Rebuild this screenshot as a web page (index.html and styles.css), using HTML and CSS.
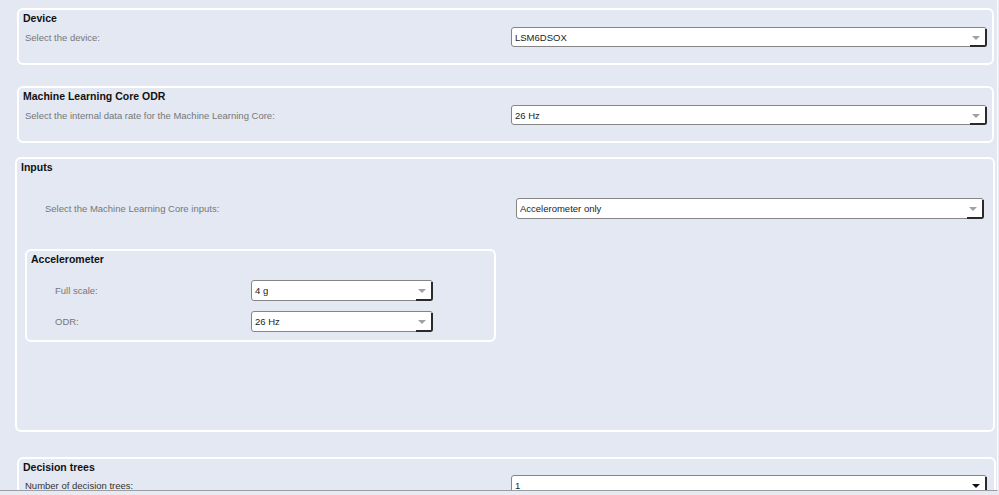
FILE: index.html
```html
<!DOCTYPE html>
<html lang="en">

<head>
    <meta charset="UTF-8">
    <meta name="viewport" content="width=device-width, initial-scale=1.0">
    <title>Machine Learning Core</title>
    <link rel="stylesheet" href="styles.css">
</head>

<body>
    <div class="viewport">
        <section class="panel panel-device">
            <h3>Device</h3>
            <div class="row">
                <label>Select the device:</label>
                <div class="combo">LSM6DSOX<span class="combo-btn"></span></div>
            </div>
        </section>

        <section class="panel panel-odr">
            <h3>Machine Learning Core ODR</h3>
            <div class="row">
                <label>Select the internal data rate for the Machine Learning Core:</label>
                <div class="combo">26 Hz<span class="combo-btn"></span></div>
            </div>
        </section>

        <section class="panel panel-inputs">
            <h3>Inputs</h3>
            <div class="row row-inputs">
                <label>Select the Machine Learning Core inputs:</label>
                <div class="combo">Accelerometer only<span class="combo-btn"></span></div>
            </div>

            <section class="panel panel-accel">
                <h3>Accelerometer</h3>
                <div class="row row-accel">
                    <label>Full scale:</label>
                    <div class="combo">4 g<span class="combo-btn"></span></div>
                </div>
                <div class="row row-accel">
                    <label>ODR:</label>
                    <div class="combo">26 Hz<span class="combo-btn"></span></div>
                </div>
            </section>
        </section>

        <section class="panel panel-trees">
            <h3>Decision trees</h3>
            <div class="row">
                <label class="dark">Number of decision trees:</label>
                <div class="combo active">1<span class="combo-btn"></span></div>
            </div>
        </section>
    </div>
</body>

</html>
```

FILE: styles.css
```css
html, body {
    margin: 0;
    padding: 0;
}

body {
    font-family: "Liberation Sans", Arial, sans-serif;
    font-size: 9.5px;
    background-color: #e8eaf0;
    color: #222;
    width: 999px;
    height: 495px;
    overflow: hidden;
}

.viewport {
    height: 491px;
    box-sizing: border-box;
    background-color: #e3e8f2;
    border-bottom: 1px solid #9a9ca4;
    border-right: 1px solid #fbfcfe;
    width: 998px;
    overflow: hidden;
    padding-top: 8px;
}

.panel {
    border: 2px solid #fff;
    border-radius: 6px;
    box-sizing: border-box;
}

.panel h3 {
    margin: 0;
    padding: 1px 0 0 4px;
    font-size: 10.5px;
    font-weight: bold;
    line-height: 14px;
    color: #111;
}

.row {
    display: grid;
    grid-template-columns: 486px 476px;
    align-items: center;
    padding-left: 6px;
    margin-top: 2px;
}

.row label {
    color: #777;
}

.row label.dark {
    color: #333;
}

.panel-device {
    margin-left: 17px;
    width: 977px;
    height: 57px;
}

.panel-odr {
    margin-left: 17px;
    margin-top: 21px;
    width: 977px;
    height: 57px;
}

.panel-inputs {
    margin-left: 15px;
    margin-top: 14px;
    width: 980px;
    height: 275px;
}

.row-inputs {
    grid-template-columns: 471px 468px;
    padding-left: 28px;
    margin-top: 24px;
}

.row-inputs .combo {
    height: 21px;
}

.panel-accel {
    margin-left: 8px;
    margin-top: 30px;
    width: 471px;
    height: 93px;
}

.row-accel {
    grid-template-columns: 196px 182px;
    padding-left: 28px;
    margin-top: 14px;
}

.row-accel .combo {
    height: 21px;
}

.row-accel + .row-accel {
    margin-top: 10px;
}

.panel-trees {
    margin-left: 17px;
    margin-top: 25px;
    width: 979px;
    height: 80px;
}

.panel-trees .row {
    margin-top: 1px;
}

.combo {
    position: relative;
    height: 20px;
    box-sizing: border-box;
    border: 1px solid #858585;
    border-radius: 3px;
    background-color: #fff;
    padding-left: 3px;
    display: flex;
    align-items: center;
    color: #222;
}

.combo-btn {
    position: absolute;
    right: -1px;
    bottom: -1px;
    width: 17px;
    height: 100%;
    box-sizing: border-box;
    border-right: 2px solid #2a2a2a;
    border-bottom: 2px solid #2a2a2a;
    border-bottom-right-radius: 3px;
}

.combo-btn::after {
    content: "";
    position: absolute;
    right: 5px;
    top: 7px;
    border-top: 4px solid #a0a0a0;
    border-left: 4px solid transparent;
    border-right: 4px solid transparent;
}

.combo.active .combo-btn::after {
    border-top-color: #111;
}
```
